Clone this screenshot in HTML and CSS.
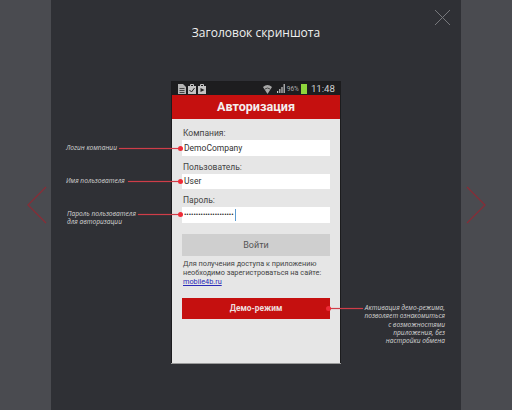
FILE: index.html
```html
<!DOCTYPE html>
<html lang="en">
<head>
  <meta charset="UTF-8" />
  <meta name="viewport" content="width=device-width, initial-scale=1.0"/>
  <title>Заголовок скриншота</title>
  <link rel="stylesheet" href="styles.css">
</head>
<body>
  <div class="viewer">
    <main class="stage">
      <h1 class="title">Заголовок скриншота</h1>

      <div class="phone">
        <div class="status-bar">
          <div class="status-group">
            <svg width="8" height="10" viewBox="0 0 8 10"><path d="M0 0h5l3 3v7H0z" fill="#b5b5b5"/><path d="M1.500 4.500h5M1.500 6.500h5M1.500 8.500h5" stroke="#444" stroke-width="1"/></svg>
            <svg width="8" height="10" viewBox="0 0 8 10"><path d="M0 2h8v8H0z" fill="#c4c4c4"/><path d="M2.500 2V.5h3V2" fill="none" stroke="#c4c4c4"/><path d="M1.500 6l2 2 3-4" fill="none" stroke="#222" stroke-width="1"/></svg>
            <svg width="8" height="10" viewBox="0 0 8 10"><path d="M0 2h8v8H0z" fill="#c4c4c4"/><path d="M2.500 2V.5h3V2" fill="none" stroke="#c4c4c4"/><path d="M2.500 4l4 2-4 2z" fill="#222"/></svg>
          </div>
          <div class="status-group">
            <svg class="wifi" width="9" height="10" viewBox="0 0 9 10"><path d="M0 3q4.500-4 9 0L4.500 10z" fill="#a8a8a8"/><path d="M2 5q2.500-2 5 0" stroke="#444" fill="none"/></svg>
            <svg width="8" height="9" viewBox="0 0 8 9"><path d="M0 7h1.200v2H0zM2.200 5h1.200v4H2.200zM4.400 3h1.200v6H4.400zM6.600 0h1.200v9H6.600z" fill="#c8c8c8"/></svg>
            <span class="battery-text">96%</span>
            <span class="battery"></span>
            <span class="clock">11:48</span>
          </div>
        </div>
        <div class="app-bar">Авторизация</div>

        <form class="login-form">
          <label class="field-label">Компания:</label>
          <div class="field">DemoCompany</div>
          <label class="field-label">Пользователь:</label>
          <div class="field">User</div>
          <label class="field-label">Пароль:</label>
          <div class="field field-password">•••••••••••••••••••••<span class="caret"></span></div>
          <div class="btn-login">Войти</div>
          <p class="hint">Для получения доступа к приложению<br>необходимо зарегистроваться на сайте:<br><a href="#">mobile4b.ru</a></p>
          <div class="btn-demo">Демо-режим</div>
        </form>
      </div>
    </main>

    <!-- close and paging controls -->
    <svg class="close" width="17" height="17" viewBox="0 0 17 17"><path d="M1 1l15 15M16 1L1 16" stroke="#77787c" stroke-width="1" fill="none"/></svg>
    <svg class="arrow arrow-left" width="20" height="38" viewBox="0 0 20 38"><path d="M19 1L1 19l18 18" stroke="#8a2c36" stroke-width="1.2" fill="none"/></svg>
    <svg class="arrow arrow-right" width="20" height="38" viewBox="0 0 20 38"><path d="M1 1l18 18L1 37" stroke="#8a2c36" stroke-width="1.2" fill="none"/></svg>

    <!-- callouts -->
    <div class="note note-company">Логин компании</div>
    <div class="line line-company"></div>
    <div class="note note-user">Имя пользователя</div>
    <div class="line line-user"></div>
    <div class="note note-pass">Пароль пользователя<br>для авторизации</div>
    <div class="line line-pass"></div>
    <div class="note note-demo">Активация демо-режима,<br>позволяет ознакомиться<br>с возможностями<br>приложения, без<br>настройки обмена</div>
    <div class="line line-demo"></div>
  </div>
</body>
</html>
```

FILE: styles.css
```css
* {
  box-sizing: border-box;
}
body {
  margin: 0;
  background: #4a4b50;
  font-family: Roboto, Arial, sans-serif;
}
.viewer {
  position: relative;
  width: 512px;
  height: 410px;
  overflow: hidden;
  display: flex;
  justify-content: center;
}
.stage {
  width: 410px;
  height: 410px;
  background: #2f3035;
  display: flex;
  flex-direction: column;
  align-items: center;
}
.title {
  margin: 25px 0 0;
  height: 56px;
  color: #f0f0f0;
  font-family: "Open Sans", sans-serif;
  font-size: 12px;
  font-weight: 400;
  line-height: 16px;
}

/* Phone */
.phone {
  width: 170px;
  height: 282px;
  background: #e6e6e6;
  border: 1px solid #1c1c1e;
  border-width: 1px 1px 0;
  box-shadow: 0 1px 0 #9a9a9a;
}
.status-bar {
  height: 13px;
  background: #1d1d1f;
  display: flex;
  justify-content: space-between;
  align-items: center;
  padding: 0 5px 0 6px;
}
.status-group {
  display: flex;
  align-items: center;
  gap: 1px;
}
.status-group:first-child {
  gap: 2px;
}
.wifi {
  margin-right: 4px;
}
.battery-text {
  color: #aaa;
  font-size: 6.5px;
  margin-left: 1px;
}
.battery {
  width: 6px;
  height: 10px;
  margin-left: 1px;
  background: #8fd63c;
}
.clock {
  margin-left: 3px;
  color: #cfcfcf;
  font-size: 9.7px;
}
.app-bar {
  height: 24px;
  background: #c5100f;
  color: #f4eeee;
  font-size: 12.6px;
  font-weight: 700;
  line-height: 24px;
  text-align: center;
}

/* Form */
.login-form {
  padding: 9px 10px 0;
  color: #333;
  font-size: 8.5px;
}
.field-label {
  display: block;
  height: 12px;
  padding-left: 1px;
  line-height: 11px;
  color: #444;
}
.field {
  height: 15.5px;
  margin-bottom: 6px;
  background: #fff;
  padding-left: 2px;
  display: flex;
  align-items: center;
}
.field-password {
  font-size: 7px;
  color: #222;
}
.caret {
  width: 1px;
  height: 12px;
  margin-left: 1px;
  background: #5b9bd0;
}
.btn-login {
  height: 22px;
  margin-top: 11.5px;
  background: #cfcfcf;
  color: #555;
  font-size: 9px;
  line-height: 22px;
  text-align: center;
}
.hint {
  margin: 3px 0 0;
  height: 39px;
  padding-left: 1px;
  font-size: 7.3px;
  line-height: 9px;
  color: #444;
}
.hint a {
  color: #2b2bb8;
}
.btn-demo {
  height: 21px;
  background: #c5100f;
  color: #eedcdc;
  font-size: 8.4px;
  font-weight: 700;
  line-height: 21px;
  text-align: center;
}

/* Controls over the stage */
.close {
  position: absolute;
  left: 434px;
  top: 9px;
}
.arrow {
  position: absolute;
  top: 186px;
}
.arrow-left {
  left: 27px;
}
.arrow-right {
  left: 466px;
}

/* Callouts */
.note {
  position: absolute;
  color: #d6d6d6;
  font-family: "Open Sans", sans-serif;
  font-size: 6.6px;
  font-style: italic;
  line-height: 8.3px;
  white-space: nowrap;
}
.note-company {
  left: 66px;
  top: 144px;
}
.note-user {
  left: 66px;
  top: 177px;
}
.note-pass {
  left: 67px;
  top: 210px;
}
.note-demo {
  right: 67px;
  top: 304px;
  text-align: right;
}
.line {
  position: absolute;
  height: 1px;
  background: #cf3d49;
  box-shadow: 0 0 1px #cf3d49;
}
.line::after {
  content: "";
  position: absolute;
  top: -2px;
  right: -2px;
  width: 5px;
  height: 5px;
  border-radius: 50%;
  background: #ee2b37;
}
.line-company {
  left: 119px;
  top: 148px;
  width: 62px;
}
.line-user {
  left: 128px;
  top: 181px;
  width: 53px;
}
.line-pass {
  left: 138px;
  top: 214px;
  width: 43px;
}
.line-demo {
  left: 328px;
  top: 308px;
  width: 35px;
}
.line-demo::after {
  left: -2px;
  right: auto;
}
```
